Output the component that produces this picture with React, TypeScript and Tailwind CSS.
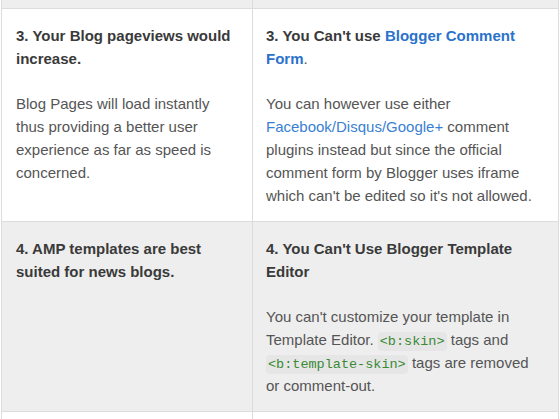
import React from "react";

const Code = ({ children }: { children: React.ReactNode }) => (
  <code className="rounded-sm bg-[#e6e6e6] px-[2px] py-[2px] font-['Liberation_Mono','DejaVu_Sans_Mono',monospace] text-[13.5px] leading-none text-[#3a8a36]">
    {children}
  </code>
);

const Cell = ({
  first,
  children,
}: {
  first?: boolean;
  children: React.ReactNode;
}) => (
  <div
    className={
      first
        ? "w-[251px] shrink-0 border-r border-[#dcdcdc] pt-[15px] pr-3 pb-[14px] pl-[14px]"
        : "flex-1 pt-[15px] pr-3 pb-[14px] pl-[13px]"
    }
  >
    {children}
  </div>
);

const Heading = ({ children }: { children: React.ReactNode }) => (
  <h3 className="text-[15px] font-bold leading-[23px] text-[#3a3a3a]">
    {children}
  </h3>
);

const Body = ({ children }: { children: React.ReactNode }) => (
  <p className="mt-[22px] text-[15px] leading-[23px] text-[#555]">{children}</p>
);

export default function App() {
  return (
    <div className="h-[419px] overflow-hidden bg-white font-['Liberation_Sans',Arial,sans-serif]">
      <div className="ml-px w-[558px] border-x border-[#dcdcdc]">
        {/* tail of the previous row */}
        <div className="flex h-[9px] border-b border-[#dcdcdc] bg-[#eeeeee]">
          <div className="w-[251px] shrink-0 border-r border-[#dcdcdc]" />
          <div className="flex-1" />
        </div>

        {/* row 3 */}
        <div className="flex border-b border-[#dcdcdc] bg-white">
          <Cell first>
            <Heading>3. Your Blog pageviews would increase.</Heading>
            <Body>
              Blog Pages will load instantly thus providing a better user
              experience as far as speed is concerned.
            </Body>
          </Cell>
          <Cell>
            <Heading>
              3. You Can't use{" "}
              <a className="text-[#2a72cc]">Blogger Comment Form</a>
              <span className="font-normal text-[#555]">.</span>
            </Heading>
            <Body>
              You can however use either{" "}
              <a className="text-[#3a7fd3]">Facebook/Disqus/Google+</a> comment
              plugins instead but since the official comment form by Blogger
              uses iframe which can't be edited so it's not allowed.
            </Body>
          </Cell>
        </div>

        {/* row 4 */}
        <div className="flex border-b border-[#dcdcdc] bg-[#eeeeee]">
          <Cell first>
            <Heading>4. AMP templates are best suited for news blogs.</Heading>
          </Cell>
          <Cell>
            <Heading>4. You Can't Use Blogger Template Editor</Heading>
            <Body>
              You can't customize your template in Template Editor.{" "}
              <Code>&lt;b:skin&gt;</Code> tags and{" "}
              <Code>&lt;b:template-skin&gt;</Code> tags are removed or
              comment-out.
            </Body>
          </Cell>
        </div>

        {/* next row */}
        <div className="flex h-10 bg-white">
          <div className="w-[251px] shrink-0 border-r border-[#dcdcdc]" />
          <div className="flex-1" />
        </div>
      </div>
    </div>
  );
}
